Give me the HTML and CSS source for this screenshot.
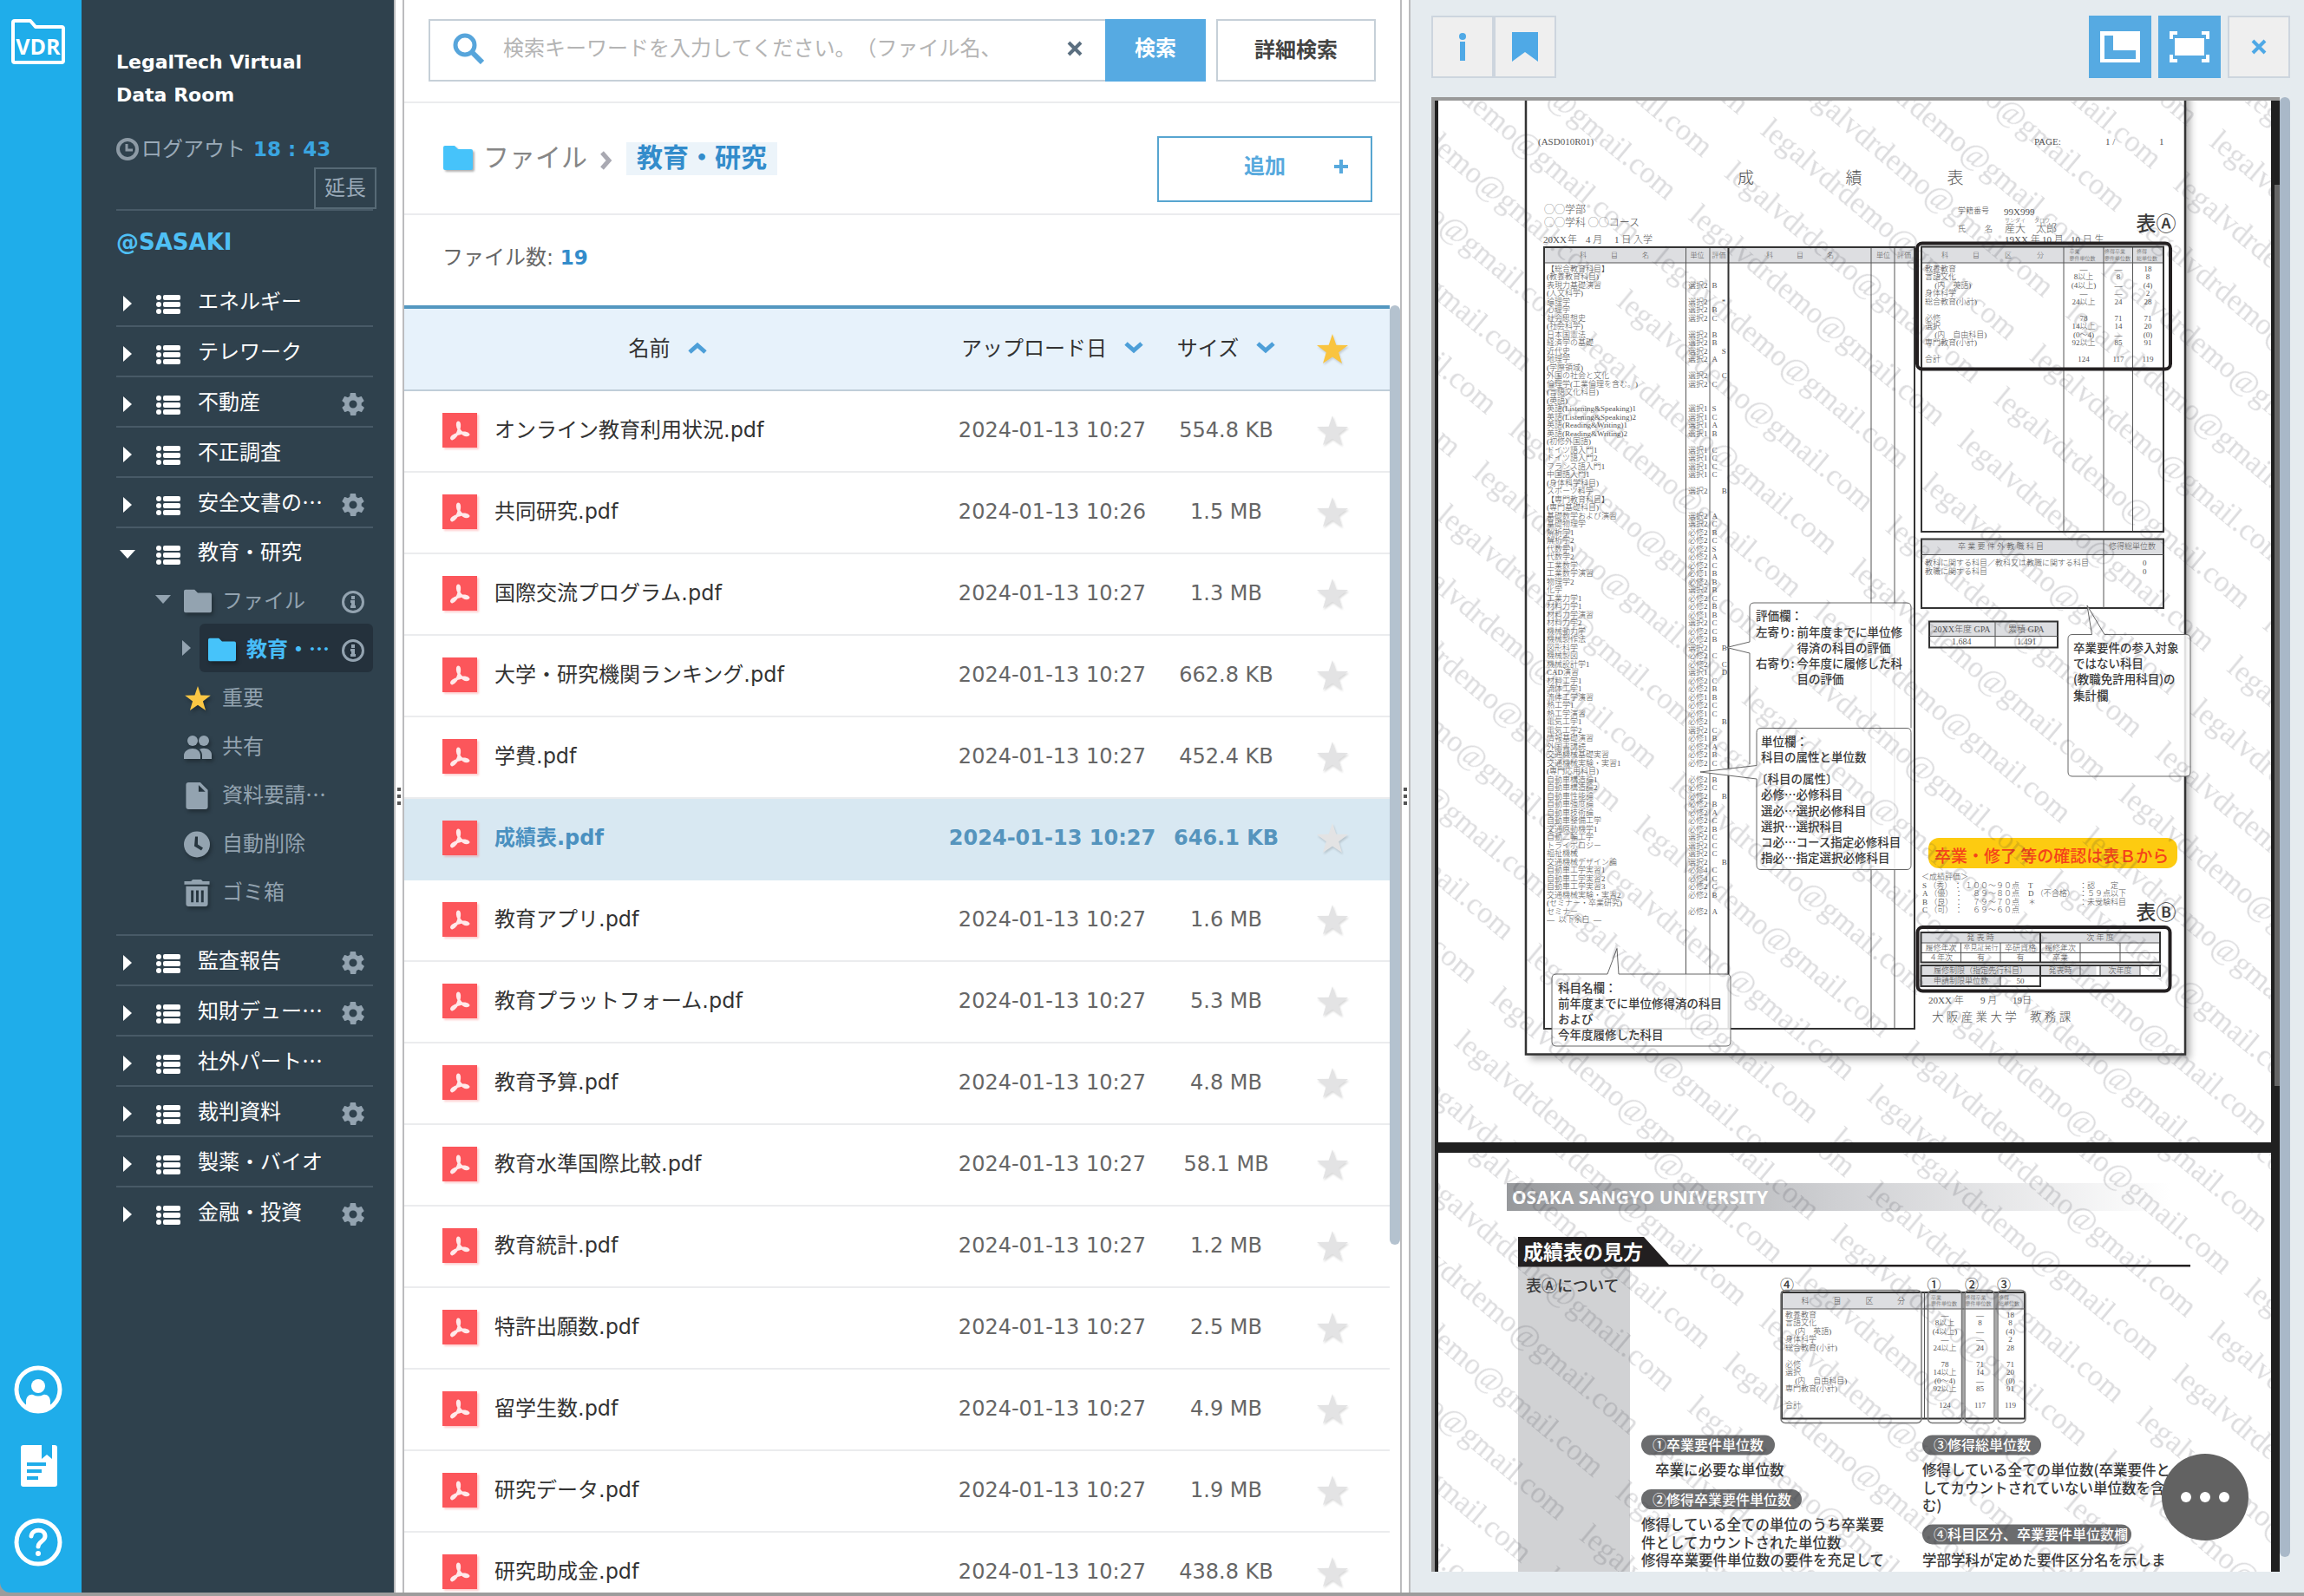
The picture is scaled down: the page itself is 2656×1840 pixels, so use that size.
FILE: index.html
```html
<!DOCTYPE html>
<html lang="ja">
<head>
<meta charset="utf-8">
<title>LegalTech Virtual Data Room</title>
<link rel="stylesheet" href="styles.css">
</head>
<body>
<svg class="defs" aria-hidden="true">
  <symbol id="i-list" viewBox="0 0 28 22"><g fill="currentColor"><rect width="6" height="6" rx="3"/><rect y="8" width="6" height="6" rx="3"/><rect y="16" width="6" height="6" rx="3"/><rect x="8" width="20" height="6" rx="2"/><rect x="8" y="8" width="20" height="6" rx="2"/><rect x="8" y="16" width="20" height="6" rx="2"/></g></symbol>
  <symbol id="i-gear" viewBox="2 2 20 20"><path fill="currentColor" d="M19.4 13c0-.3.1-.6.1-1s0-.7-.1-1l2.1-1.6c.2-.2.3-.4.1-.7l-2-3.4c-.1-.2-.4-.3-.6-.2l-2.5 1c-.5-.4-1.1-.7-1.7-1l-.4-2.6c0-.3-.2-.5-.5-.5h-4c-.2 0-.4.2-.5.4L9.100 5.100c-.6.200-1.200.600-1.700 1l-2.500-1c-.200-.100-.500 0-.600.200l-2 3.400c-.100.300 0 .500.200.700L4.600 11c0 .300-.100.600-.100 1s0 .700.100 1l-2.100 1.600c-.200.200-.300.400-.100.700l2 3.400c.100.200.400.300.600.200l2.500-1c.500.400 1.100.700 1.700 1l.400 2.600c0 .300.200.500.500.500h4c.200 0 .500-.200.500-.400l.400-2.600c.600-.300 1.200-.600 1.700-1l2.500 1c.200.100.500 0 .600-.200l2-3.400c.100-.200.100-.500-.100-.700zM12 15.500a3.500 3.500 0 1 1 0-7 3.500 3.500 0 0 1 0 7z"/></symbol>
  <symbol id="i-info" viewBox="0 0 26 26"><circle cx="13" cy="13" r="11.500" fill="none" stroke="currentColor" stroke-width="3"/><path fill="currentColor" d="M11 6h4v4h-4zM10 11h5v6h1v3h-6v-3h1v-3h-1z"/></symbol>
  <symbol id="i-right" viewBox="0 0 10 18"><path fill="currentColor" d="M0 0l10 9-10 9z"/></symbol>
  <symbol id="i-down" viewBox="0 0 18 10"><path fill="currentColor" d="M0 0h18l-9 10z"/></symbol>
  <symbol id="i-folder" viewBox="0 0 34 28"><path fill="currentColor" d="M2 0h11l4 4h15a2 2 0 0 1 2 2v20a2 2 0 0 1-2 2H2a2 2 0 0 1-2-2V2a2 2 0 0 1 2-2z"/></symbol>
  <symbol id="i-star" viewBox="0 0 36 34"><path fill="currentColor" d="M18 0l4.300 12.700L36 13l-10.800 8.300L29 34l-11-7.500L7 34l3.800-12.700L0 13l13.700-.300z"/></symbol>
  <symbol id="i-people" viewBox="0 0 32 28"><g fill="currentColor"><circle cx="10" cy="7" r="6"/><circle cx="23" cy="7" r="6"/><path d="M0 28v-4c0-5 5-8 10-8s9 3 9 8v4zM21 28v-4c0-3-1-5-3-7 6-3 14 0 14 6v5z"/></g></symbol>
  <symbol id="i-doc" viewBox="0 0 26 32"><path fill="currentColor" fill-rule="evenodd" d="M3 0h14l9 9v20a3 3 0 0 1-3 3H3a3 3 0 0 1-3-3V3a3 3 0 0 1 3-3zM15 3v8h8z"/></symbol>
  <symbol id="i-clock" viewBox="0 0 30 30"><path fill="currentColor" fill-rule="evenodd" d="M15 0a15 15 0 1 0 0 30 15 15 0 0 0 0-30zM13 6h3v9l6 4-2 3-8-5z"/></symbol>
  <symbol id="i-trash" viewBox="0 0 30 32"><path fill="currentColor" fill-rule="evenodd" d="M10 0h10l2 2h8v4H0V2h8zM2 8h26v21a3 3 0 0 1-3 3H5a3 3 0 0 1-3-3zM8 13v14h3V13zM14 13v14h3V13zM20 13v14h3V13z"/></symbol>
  <symbol id="i-pdf" viewBox="0 0 40 40"><path fill="#fc565b" d="M0 0h40v40H0z"/><path fill="none" stroke="#ffe9ea" stroke-width="3" stroke-linecap="round" stroke-linejoin="round" d="M18 11c2 0 2 4 1 8-1 5-5 10-8 11-2-1 2-5 8-6 5-2 10-1 11 1-3 2-8-1-11-6-2-3-2-7-1-8z"/></symbol>
  <symbol id="i-up" viewBox="0 0 22 14"><path fill="none" stroke="currentColor" stroke-width="5" d="M2 12l9-8 9 8"/></symbol>
  <symbol id="i-dn" viewBox="0 0 22 14"><path fill="none" stroke="currentColor" stroke-width="5" d="M2 2l9 8 9-8"/></symbol>
  <symbol id="i-x" viewBox="0 0 18 18"><path fill="none" stroke="currentColor" stroke-width="4" d="M2 2l14 14M16 2L2 16"/></symbol>
</svg>

<div class="app">
  <nav class="rail" aria-label="メイン">
    <a class="rail-link" href="#" aria-label="VDR">
      <svg width="62" height="54" viewBox="0 0 62 54"><path fill="none" stroke="#fff" stroke-width="4" stroke-linejoin="round" d="M2 4q0-2 2-2h18l6 7h30q2 0 2 2v37q0 2-2 2H4q-2 0-2-2z"/><text class="vdr" x="31" y="41" text-anchor="middle">VDR</text></svg>
    </a>
    <div class="rail-bottom">
      <a class="rail-link" href="#" aria-label="ユーザー"><svg width="56" height="56" viewBox="0 0 56 56"><circle cx="28" cy="28" r="25" fill="none" stroke="#fff" stroke-width="5"/><circle cx="28" cy="24" r="8" fill="#fff"/><path fill="#fff" d="M14 49V42c0-6 4-9 8-8q6 3 12 0c4-1 8 2 8 8v7q-14 8-28 0z"/></svg></a>
      <a class="rail-link" href="#" aria-label="マニュアル"><svg width="56" height="56" viewBox="0 0 56 56"><path fill="#fff" fill-rule="evenodd" d="M11 4h21v16l6-5 6 5V4h3q3 0 3 3v42q0 3-3 3H11q-3 0-3-3V7q0-3 3-3zM15 24v4h22v-4zM15 32v4h17v-4zM15 40v4h13v-4z"/></svg></a>
      <a class="rail-link" href="#" aria-label="ヘルプ"><svg width="56" height="56" viewBox="0 0 56 56"><circle cx="28" cy="28" r="25" fill="none" stroke="#fff" stroke-width="5"/><path fill="none" stroke="#fff" stroke-width="5" stroke-linecap="round" d="M20 21c1-9 16-9 16 0 0 6-8 6-8 12"/><circle cx="28" cy="41" r="3" fill="#fff"/></svg></a>
    </div>
  </nav>

  <aside class="side">
    <h1 class="brand">LegalTech Virtual Data Room</h1>
    <div class="session">
      <svg class="dim" width="26" height="26" viewBox="0 0 26 26"><circle cx="13" cy="13" r="11" fill="none" stroke="currentColor" stroke-width="4"/><path fill="none" stroke="currentColor" stroke-width="3" d="M12 7v7h7"/></svg>
      <span>ログアウト</span><b class="timer">18 : 43</b>
    </div>
    <div class="extend-row"><button class="extend" type="button">延長</button></div>
    <p class="user">@SASAKI</p>
    <ul class="tree">
      <li class="project"><a class="row" href="#"><svg class="arr"><use href="#i-right"/></svg><svg class="lst"><use href="#i-list"/></svg><span>エネルギー</span></a></li>
      <li class="project"><a class="row" href="#"><svg class="arr"><use href="#i-right"/></svg><svg class="lst"><use href="#i-list"/></svg><span>テレワーク</span></a></li>
      <li class="project"><a class="row" href="#"><svg class="arr"><use href="#i-right"/></svg><svg class="lst"><use href="#i-list"/></svg><span>不動産</span><svg class="act"><use href="#i-gear"/></svg></a></li>
      <li class="project"><a class="row" href="#"><svg class="arr"><use href="#i-right"/></svg><svg class="lst"><use href="#i-list"/></svg><span>不正調査</span></a></li>
      <li class="project"><a class="row" href="#"><svg class="arr"><use href="#i-right"/></svg><svg class="lst"><use href="#i-list"/></svg><span>安全文書の…</span><svg class="act"><use href="#i-gear"/></svg></a></li>
      <li class="project open"><a class="row" href="#"><svg class="arr-d"><use href="#i-down"/></svg><svg class="lst"><use href="#i-list"/></svg><span>教育・研究</span></a>
        <ul class="sub">
          <li class="item"><svg class="tog"><use href="#i-down"/></svg><a class="leaf" href="#"><svg class="ic"><use href="#i-folder"/></svg><span>ファイル</span><svg class="act"><use href="#i-info"/></svg></a></li>
          <li class="item current"><svg class="tog"><use href="#i-right"/></svg><a class="leaf" href="#"><svg class="ic"><use href="#i-folder"/></svg><span>教育・…</span><svg class="act"><use href="#i-info"/></svg></a></li>
          <li class="item"><a class="leaf" href="#"><svg class="ic gold"><use href="#i-star"/></svg><span>重要</span></a></li>
          <li class="item"><a class="leaf" href="#"><svg class="ic"><use href="#i-people"/></svg><span>共有</span></a></li>
          <li class="item"><a class="leaf" href="#"><svg class="ic tall"><use href="#i-doc"/></svg><span>資料要請…</span></a></li>
          <li class="item"><a class="leaf" href="#"><svg class="ic tall"><use href="#i-clock"/></svg><span>自動削除</span></a></li>
          <li class="item"><a class="leaf" href="#"><svg class="ic tall"><use href="#i-trash"/></svg><span>ゴミ箱</span></a></li>
        </ul>
      </li>
      <li class="project"><a class="row" href="#"><svg class="arr"><use href="#i-right"/></svg><svg class="lst"><use href="#i-list"/></svg><span>監査報告</span><svg class="act"><use href="#i-gear"/></svg></a></li>
      <li class="project"><a class="row" href="#"><svg class="arr"><use href="#i-right"/></svg><svg class="lst"><use href="#i-list"/></svg><span>知財デュー…</span><svg class="act"><use href="#i-gear"/></svg></a></li>
      <li class="project"><a class="row" href="#"><svg class="arr"><use href="#i-right"/></svg><svg class="lst"><use href="#i-list"/></svg><span>社外パート…</span></a></li>
      <li class="project"><a class="row" href="#"><svg class="arr"><use href="#i-right"/></svg><svg class="lst"><use href="#i-list"/></svg><span>裁判資料</span><svg class="act"><use href="#i-gear"/></svg></a></li>
      <li class="project"><a class="row" href="#"><svg class="arr"><use href="#i-right"/></svg><svg class="lst"><use href="#i-list"/></svg><span>製薬・バイオ</span></a></li>
      <li class="project"><a class="row" href="#"><svg class="arr"><use href="#i-right"/></svg><svg class="lst"><use href="#i-list"/></svg><span>金融・投資</span><svg class="act"><use href="#i-gear"/></svg></a></li>
    </ul>
  </aside>

  <div class="splitter"><i></i><i></i><i></i></div>

  <main class="files">
    <form class="search" role="search">
      <div class="searchbox">
        <svg width="36" height="36" viewBox="0 0 36 36"><circle cx="14" cy="14" r="11" fill="none" stroke="#57a5db" stroke-width="5"/><path stroke="#57a5db" stroke-width="6" d="M22 22l12 12"/></svg>
        <input type="text" aria-label="検索キーワード" placeholder="検索キーワードを入力してください。（ファイル名、">
        <button class="clear" type="button" aria-label="クリア"><svg width="18" height="18"><use href="#i-x"/></svg></button>
      </div>
      <button class="go" type="submit">検索</button>
      <button class="advanced" type="button">詳細検索</button>
    </form>
    <div class="crumbs">
      <a class="crumb" href="#"><svg width="34" height="28"><use href="#i-folder"/></svg>ファイル</a>
      <svg width="14" height="22" viewBox="0 0 14 22"><path fill="none" stroke="#a9a9b2" stroke-width="5" d="M2 2l8 9-8 9"/></svg>
      <a class="crumb here" href="#">教育・研究</a>
      <button class="add" type="button">追加<svg width="16" height="16" viewBox="0 0 16 16"><path stroke="currentColor" stroke-width="4" d="M8 0v16M0 8h16"/></svg></button>
    </div>
    <p class="count">ファイル数: <b>19</b></p>
    <div class="scroller">
      <div class="scroll-body">
        <table class="list">
          <colgroup><col><col class="c-date"><col class="c-size"><col class="c-star"></colgroup>
          <thead><tr>
            <th>名前<svg class="sort"><use href="#i-up"/></svg></th>
            <th>アップロード日<svg class="sort"><use href="#i-dn"/></svg></th>
            <th>サイズ<svg class="sort"><use href="#i-dn"/></svg></th>
            <th aria-label="重要"><svg class="star gold"><use href="#i-star"/></svg></th>
          </tr></thead>
          <tbody>
            <tr><td><a class="file" href="#"><svg><use href="#i-pdf"/></svg>オンライン教育利用状況.pdf</a></td><td>2024-01-13 10:27</td><td>554.8 KB</td><td><svg class="star"><use href="#i-star"/></svg></td></tr>
            <tr><td><a class="file" href="#"><svg><use href="#i-pdf"/></svg>共同研究.pdf</a></td><td>2024-01-13 10:26</td><td>1.5 MB</td><td><svg class="star"><use href="#i-star"/></svg></td></tr>
            <tr><td><a class="file" href="#"><svg><use href="#i-pdf"/></svg>国際交流プログラム.pdf</a></td><td>2024-01-13 10:27</td><td>1.3 MB</td><td><svg class="star"><use href="#i-star"/></svg></td></tr>
            <tr><td><a class="file" href="#"><svg><use href="#i-pdf"/></svg>大学・研究機関ランキング.pdf</a></td><td>2024-01-13 10:27</td><td>662.8 KB</td><td><svg class="star"><use href="#i-star"/></svg></td></tr>
            <tr><td><a class="file" href="#"><svg><use href="#i-pdf"/></svg>学費.pdf</a></td><td>2024-01-13 10:27</td><td>452.4 KB</td><td><svg class="star"><use href="#i-star"/></svg></td></tr>
            <tr class="selected"><td><a class="file" href="#"><svg><use href="#i-pdf"/></svg>成績表.pdf</a></td><td>2024-01-13 10:27</td><td>646.1 KB</td><td><svg class="star"><use href="#i-star"/></svg></td></tr>
            <tr><td><a class="file" href="#"><svg><use href="#i-pdf"/></svg>教育アプリ.pdf</a></td><td>2024-01-13 10:27</td><td>1.6 MB</td><td><svg class="star"><use href="#i-star"/></svg></td></tr>
            <tr><td><a class="file" href="#"><svg><use href="#i-pdf"/></svg>教育プラットフォーム.pdf</a></td><td>2024-01-13 10:27</td><td>5.3 MB</td><td><svg class="star"><use href="#i-star"/></svg></td></tr>
            <tr><td><a class="file" href="#"><svg><use href="#i-pdf"/></svg>教育予算.pdf</a></td><td>2024-01-13 10:27</td><td>4.8 MB</td><td><svg class="star"><use href="#i-star"/></svg></td></tr>
            <tr><td><a class="file" href="#"><svg><use href="#i-pdf"/></svg>教育水準国際比較.pdf</a></td><td>2024-01-13 10:27</td><td>58.1 MB</td><td><svg class="star"><use href="#i-star"/></svg></td></tr>
            <tr><td><a class="file" href="#"><svg><use href="#i-pdf"/></svg>教育統計.pdf</a></td><td>2024-01-13 10:27</td><td>1.2 MB</td><td><svg class="star"><use href="#i-star"/></svg></td></tr>
            <tr><td><a class="file" href="#"><svg><use href="#i-pdf"/></svg>特許出願数.pdf</a></td><td>2024-01-13 10:27</td><td>2.5 MB</td><td><svg class="star"><use href="#i-star"/></svg></td></tr>
            <tr><td><a class="file" href="#"><svg><use href="#i-pdf"/></svg>留学生数.pdf</a></td><td>2024-01-13 10:27</td><td>4.9 MB</td><td><svg class="star"><use href="#i-star"/></svg></td></tr>
            <tr><td><a class="file" href="#"><svg><use href="#i-pdf"/></svg>研究データ.pdf</a></td><td>2024-01-13 10:27</td><td>1.9 MB</td><td><svg class="star"><use href="#i-star"/></svg></td></tr>
            <tr><td><a class="file" href="#"><svg><use href="#i-pdf"/></svg>研究助成金.pdf</a></td><td>2024-01-13 10:27</td><td>438.8 KB</td><td><svg class="star"><use href="#i-star"/></svg></td></tr>
          </tbody>
        </table>
      </div>
      <div class="track"><div class="thumb"></div></div>
    </div>
  </main>

  <div class="splitter"><i></i><i></i><i></i></div>

  <section class="viewer" aria-label="プレビュー">
    <div class="tools">
      <div class="pair">
        <button class="tool" type="button" aria-label="情報"><svg width="8" height="32" viewBox="0 0 8 32"><circle cx="4" cy="4" r="4" fill="#4fa9e6"/><path fill="#4fa9e6" d="M1 10h6v22H1z"/></svg></button>
        <button class="tool" type="button" aria-label="ブックマーク"><svg width="30" height="34" viewBox="0 0 30 34"><path fill="#4fa9e6" d="M0 0h30v34l-15-11L0 34z"/></svg></button>
      </div>
      <div class="right-tools">
        <button class="tool on" type="button" aria-label="小窓"><svg width="46" height="36" viewBox="0 0 46 36"><path fill="#fff" fill-rule="evenodd" d="M0 0h46v36H0zM5 5v27h36V22H15V5z"/></svg></button>
        <button class="tool on" type="button" aria-label="全画面"><svg width="46" height="36" viewBox="0 0 46 36"><path fill="#fff" d="M6 8h34v20H6z"/><path fill="none" stroke="#fff" stroke-width="4" d="M2 9V2h7M37 2h7v7M44 27v7h-7M9 34H2v-7"/></svg></button>
        <button class="tool" type="button" aria-label="閉じる"><svg class="blue" width="18" height="18"><use href="#i-x"/></svg></button>
      </div>
    </div>
    <div class="frame">
      <div class="pages">
        <svg class="page" viewBox="3316 232 1920 2402" role="img" aria-label="成績表 1ページ">
          <defs>
            <pattern id="wm1" width="810" height="129" patternUnits="userSpaceOnUse" patternTransform="rotate(40) translate(4112 -2462)"><text class="wm" x="2" y="90">legalvdrdemo@gmail.com</text></pattern>
            <filter id="soft" x="-5%" y="-5%" width="110%" height="110%"><feGaussianBlur stdDeviation="10"/></filter>
          </defs>
          <path fill="#fff" d="M3316 232h1920v2402H3316z"/>
          <path fill="#000" opacity=".35" filter="url(#soft)" d="M3528 180h1520v2262H3528z"/>
          <path class="ink5" fill="#fff" d="M3518 180h1520v2251H3518z"/>
          <g class="sf">
            <text class="z22" x="3546" y="326">(ASD010R01)</text>
            <text class="z22" x="4690" y="326">PAGE:</text><text class="z22" x="4854" y="326">1 /</text><text class="z22" x="4978" y="326">1</text>
            <text class="z38" x="4006" y="410">成</text><text class="z38" x="4255" y="410">績</text><text class="z38" x="4489" y="410">表</text>
            <text class="z24 jp" x="3560" y="480">◯◯学部</text>
            <text class="z24 jp" x="3560" y="511">◯◯学科 ◯◯コース</text>
            <text class="z22" x="3558" y="552">20XX</text><text class="z22" x="3614" y="552">年</text><text class="z22" x="3656" y="552">4 月</text><text class="z22" x="3722" y="552">1 日 入学</text>
            <text class="z18" x="4514" y="485">学籍番号</text><text class="z22" x="4620" y="487">99X999</text>
            <text class="z12" x="4622" y="508">サンダイ</text><text class="z12" x="4690" y="508">タロウ</text>
            <text class="z18" x="4514" y="527">氏</text><text class="z18" x="4576" y="527">名</text>
            <text class="z24" x="4622" y="527">産大</text><text class="z24" x="4694" y="527">太郎</text>
            <text class="z22" x="4622" y="551">19XX 年</text><text class="z22" x="4708" y="551">10 月</text><text class="z22" x="4774" y="551">10 日 生</text>
          </g>
          <text class="gt z46" x="4925" y="512">表Ⓐ</text>
          <path fill="#dddee1" d="M3560 572h852v34h-852zM4430 569h558v37h-558z"/>
          <path class="ink2" d="M3887 570v1802M3942 570v1802M4314 570v1802M4368 570v1802M3560 606h852M4430 606h558M4758 569v657M4850 569v657M4917 569v657"/>
          <path class="ink4" d="M3560 570h854v1802h-854zM3985 570v1802M4430 569h558v657h-558z"/>
          <g class="sf mid z16">
            <text x="3650" y="588">科</text><text x="3722" y="588">目</text><text x="3794" y="588">名</text><text x="3913" y="588">単位</text><text x="3963" y="588">評価</text>
            <text x="4080" y="588">科</text><text x="4150" y="588">目</text><text x="4220" y="588">名</text><text x="4342" y="588">単位</text><text x="4390" y="588">評価</text>
            <text x="4484" y="588">科</text><text x="4556" y="588">目</text><text x="4630" y="588">区</text><text x="4704" y="588">分</text>
          </g>
          <g class="sf z12">
            <text x="4771" y="580">卒業</text><text x="4771" y="595">要件単位数</text>
            <text x="4852" y="580">修得卒業</text><text x="4852" y="595">要件単位数</text>
            <text x="4926" y="580">修得</text><text x="4926" y="595">総単位数</text>
          </g>
          <foreignObject x="3566" y="610" width="316" height="1560"><pre class="rows">【総合教育科目】
(教養教育科目)
表現力基礎演習
(人文科学)
論理学
心理学
社会思想史
(社会科学)
日本国憲法
経済学の基礎
近代史
地理学
(学際領域)
外国の社会と文化
倫理学(工業倫理を含む。)
(言語文化科目)
(英語)
英語(Listening&amp;Speaking)1
英語(Listening&amp;Speaking)2
英語(Reading&amp;Writing)1
英語(Reading&amp;Writing)2
(初修外国語)
ドイツ語入門1
ドイツ語入門2
フランス語入門1
中国語入門1
(身体科学科目)
スポーツ科学
【専門教育科目】
(専門基礎科目)
基礎数学および演習
基礎物理学
解析学1
解析学2
代数学1
代数学2
工業数学
工業数学演習
物理学2
化学
工業力学1
材料力学1
材料力学演習
材料力学2
機械動力学
機械製作法
図形科学
機械製図
機械設計学1
CAD演習
材料工学1
流体工学1
流体工学演習
熱工学1
熱工学演習
電気工学1
電気工学2
情報基礎演習
外国書講読
交通機械基礎実習
交通機械実験・実習1
(専門応用科目)
自動車構造論1
自動車構造論2
自動車性能論
自動車強度論
自動車技術論
自動車整備工学
交通原動機学1
自動二輪工学
トライボロジー
福祉機械
交通機械デザイン論
自動車工学実習1
自動車工学実習2
自動車工学実習3
交通機械実験・実習2
(セミナー・卒業研究)
セミナー
―  以下余白  ―</pre></foreignObject>
          <foreignObject x="3892" y="610" width="50" height="1560"><pre class="rows">&nbsp;

選択2

選択2
選択2
選択2

選択2
選択2
選択2
選択2

選択2
選択2


選択1
選択1
選択1
選択1

選択1
選択1
選択1
選択1

選択2


選択2
選択2
必修2
必修2
必修2
必修2
必修2
必修1
必修2
選択2
必修2
必修2
必修1
選択2
必修2
必修2
選択2
必修2
必修2
選択1
必修2
必修2
必修1
必修2
必修1
必修2
選択2
必修1
必修2
必修2
必修2

必修2
必修2
必修2
必修2
必修2
必修2
必修2
選択2
選択2
選択2
選択2
必修4
必修4
必修2
必修2

必修2</pre></foreignObject>
          <foreignObject x="3947" y="610" width="38" height="1560"><pre class="rows">&nbsp;

B

     *
B
C

B
B
     S
A

     C
C


S
C
A
B

C
C
C
C

     B


A
C
B
C
S
A
C
B
B
B
C
B
B
C
C
B
     B
C
     C
     D
C
B
B
C
C
     B
C
B
A
B
C

B
C
     B
B
A
C
B
C
C
C
     B
C
C
C
B

A</pre></foreignObject>
          <foreignObject x="4438" y="610" width="300" height="240"><pre class="rows">教養教育
言語文化
　 (内　英語)
身体科学
総合教育(小計)

必修
選択
　 (内　自由科目)
専門教育(小計)

合計</pre></foreignObject>
          <foreignObject x="4762" y="610" width="84" height="240"><pre class="rows cen">―
8以上
(4以上)
―
24以上

78
14以上
(0～4)
92以上

124</pre></foreignObject>
          <foreignObject x="4853" y="610" width="62" height="240"><pre class="rows cen">―
8
―
―
24

71
14
―
85

117</pre></foreignObject>
          <foreignObject x="4921" y="610" width="62" height="240"><pre class="rows cen">18
8
(4)
2
28

71
20
(0)
91

119</pre></foreignObject>
          <rect class="frame-ink" x="4420" y="561" width="584" height="290" rx="12"/>

          <path fill="#dddee1" d="M4430 1243h558v36h-558zM4448 1433h296v34h-296z"/>
          <path class="ink4" d="M4430 1243h558v159h-558zM4448 1433h296v60h-296z"/>
          <path class="ink2" d="M4430 1279h558M4850 1243v159M4448 1467h296M4600 1433v60"/>
          <g class="sf z18">
            <text x="4514" y="1260">卒 業 要 件 外 教 職 科 目</text><text x="4862" y="1260">修得総単位数</text>
            <text x="4438" y="1298">教科に関する科目／教科又は教職に関する科目</text><text x="4940" y="1298">0</text>
            <text x="4438" y="1317">教職に関する科目</text><text x="4940" y="1317">0</text>
            <text class="z20" x="4457" y="1450">20XX年度 GPA</text><text class="z20" x="4630" y="1450">累積 GPA</text>
            <text class="z20" x="4500" y="1479">1.684</text><text class="z20" x="4650" y="1479">1.491</text>
          </g>

          <path class="call" d="M4034 1762V1506l-53-13 53-13v-80q0-10 10-10h352q10 0 10 10v279"/>
          <path class="call" d="M4060 1679h336q10 0 10 10v306q0 10-10 10h-336q-10 0-10-10v-199l-130-16 130-15v-76q0-10 10-10z"/>
          <path class="call" d="M3588 2246h118l22-59 4 59h248q10 0 10 10v146q0 10-10 10h-392q-10 0-10-10v-146q0-10 10-10z"/>
          <path class="call" d="M4778 1463h45l-11-67 40 67h188q10 0 10 10v307q0 10-10 10h-262q-10 0-10-10v-307q0-10 10-10z"/>
          <g class="gt z27">
            <text x="4048" y="1418">評価欄：</text><text x="4048" y="1455">左寄り:</text><text x="4143" y="1455">前年度までに単位修</text><text x="4143" y="1492">得済の科目の評価</text><text x="4048" y="1528">右寄り:</text><text x="4143" y="1528">今年度に履修した科</text><text x="4143" y="1564">目の評価</text>
            <text x="4060" y="1707">単位欄：</text><text x="4060" y="1744">科目の属性と単位数</text><text x="4048" y="1794">〔科目の属性〕</text><text x="4060" y="1830">必修…必修科目</text><text x="4060" y="1867">選必…選択必修科目</text><text x="4060" y="1903">選択…選択科目</text><text x="4060" y="1940">コ必…コース指定必修科目</text><text x="4060" y="1976">指必…指定選択必修科目</text>
            <text x="3592" y="2276">科目名欄：</text><text x="3592" y="2312">前年度までに単位修得済の科目</text><text x="3592" y="2347">および</text><text x="3592" y="2383">今年度履修した科目</text>
            <text x="4780" y="1492">卒業要件の参入対象</text><text x="4780" y="1528">ではない科目</text><text x="4780" y="1564">(教職免許用科目)の</text><text x="4780" y="1601">集計欄</text>
          </g>
          <rect x="4446" y="1932" width="574" height="70" rx="24" fill="#fdcb11"/>
          <text class="gt hot" x="4460" y="1970">卒業・修了 等の確認は表Ｂから</text>
          <g class="sf z18">
            <text x="4430" y="2022">＜成績評価＞</text>
            <text x="4432" y="2041">S （秀） ：</text><text x="4530" y="2041">１００～９０点</text><text x="4676" y="2041">T</text><text x="4794" y="2041">：認　　定</text>
            <text x="4432" y="2060">A （優） ：</text><text x="4548" y="2060">８９～８０点</text><text x="4676" y="2060">D （不合格）</text><text x="4794" y="2060">：５９点以下</text>
            <text x="4432" y="2079">B （良） ：</text><text x="4548" y="2079">７９～７０点</text><text x="4676" y="2079">＊</text><text x="4794" y="2079">：未受験科目</text>
            <text x="4432" y="2098">C （可） ：</text><text x="4548" y="2098">６９～６０点</text>
          </g>
          <text class="gt z46" x="4925" y="2100">表Ⓑ</text>
          <path fill="#dddee1" d="M4429 2150h551v24h-551zM4429 2226h404v24h-404zM4704 2226h94v24h-94zM4842 2226h92v24h-92zM4429 2250h184v24h-184z"/>
          <path class="ink2" d="M4429 2174h551M4429 2197h551M4521 2174v45M4612 2174v45M4796 2174v45M4888 2174v45M4796 2226v24M4842 2226v24M4934 2226v24M4612 2250v24"/>
          <path class="ink4" d="M4429 2150h551v69h-551zM4704 2150v69M4429 2226h551v24h-551zM4429 2250v24h275v-48"/>
          <g class="sf mid z18">
            <text x="4566" y="2162">発 表 時</text><text x="4842" y="2162">次 年 度</text>
            <text x="4475" y="2185">履修年次</text><text class="z16" x="4567" y="2185">卒見証発行</text><text x="4658" y="2185">卒研資格</text><text x="4750" y="2185">履修年次</text>
            <text x="4475" y="2208">４年次</text><text x="4567" y="2208">有</text><text x="4658" y="2208">有</text><text x="4750" y="2208">卒業</text>
            <text x="4566" y="2238">履修制限（指定先行科目）</text><text x="4750" y="2238">発表時</text><text x="4888" y="2238">次年度</text>
            <text x="4521" y="2262">申請制限単位数</text><text x="4658" y="2262">50</text>
          </g>
          <rect class="frame-ink" x="4421" y="2138" width="582" height="147" rx="12"/>
          <g class="sf"><text class="z22" x="4446" y="2305">20XX 年</text><text class="z22" x="4566" y="2305">9 月</text><text class="z22" x="4640" y="2305">19日</text><text class="z27" x="4454" y="2345">大 阪 産 業 大 学</text><text class="z27" x="4680" y="2345">教 務 課</text></g>
          <path fill="url(#wm1)" d="M3316 232h1920v2402H3316z"/>
        </svg>

        <svg class="page" viewBox="3316 2658 1920 966" role="img" aria-label="成績表 2ページ">
          <defs>
            <pattern id="wm2" width="810" height="129" patternUnits="userSpaceOnUse" patternTransform="rotate(40) translate(5066 -356)"><text class="wm" x="2" y="90">legalvdrdemo@gmail.com</text></pattern>
            <linearGradient id="bar"><stop offset="0" stop-color="#97999c"/><stop offset=".5" stop-color="#cfd0d3"/><stop offset="1" stop-color="#fff"/></linearGradient>
          </defs>
          <path fill="#fff" d="M3316 2658h1920v966H3316z"/>
          <path fill="url(#bar)" d="M3474 2728h1530v64H3474z"/>
          <text class="univ" x="3486" y="2760">OSAKA SANGYO UNIVERSITY</text>
          <path fill="#d1d2d4" d="M3500 2920h258v704h-258z"/>
          <path fill="#221f20" d="M3500 2852h290l58 64h1202v5H3500z"/>
          <text class="gt title" x="3512" y="2883">成績表の見方</text>
          <text class="gt z36" x="3518" y="2962">表Ⓐについて</text>
          <g class="gt mid z32"><text x="4120" y="2959">④</text><text x="4459" y="2959">①</text><text x="4546" y="2959">②</text><text x="4620" y="2959">③</text></g>
          <path fill="#dddee1" d="M4108 2980h560v38h-560z"/>
          <path class="ink4" d="M4108 2980h560v291h-560z"/>
          <path class="ink2" d="M4108 3018h560M4437 2980v291M4526 2980v291M4602 2980v291"/>
          <g class="group"><rect x="4106" y="2975" width="324" height="306" rx="10"/><rect x="4445" y="2975" width="78" height="306" rx="10"/><rect x="4530" y="2975" width="68" height="306" rx="10"/><rect x="4606" y="2975" width="64" height="306" rx="10"/></g>
          <g class="sf mid z18"><text x="4162" y="3000">科</text><text x="4236" y="3000">目</text><text x="4310" y="3000">区</text><text x="4383" y="3000">分</text></g>
          <g class="sf z12"><text x="4452" y="2992">卒業</text><text x="4452" y="3006">要件単位数</text><text x="4531" y="2992">修得卒業</text><text x="4531" y="3006">要件単位数</text><text x="4608" y="2992">修得</text><text x="4608" y="3006">総単位数</text></g>
          <foreignObject x="4116" y="3022" width="300" height="240"><pre class="rows">教養教育
言語文化
　 (内　英語)
身体科学
総合教育(小計)

必修
選択
　 (内　自由科目)
専門教育(小計)

合計</pre></foreignObject>
          <foreignObject x="4442" y="3022" width="84" height="240"><pre class="rows cen">―
8以上
(4以上)
―
24以上

78
14以上
(0～4)
92以上

124</pre></foreignObject>
          <foreignObject x="4534" y="3022" width="62" height="240"><pre class="rows cen">―
8
―
―
24

71
14
―
85

117</pre></foreignObject>
          <foreignObject x="4604" y="3022" width="62" height="240"><pre class="rows cen">18
8
(4)
2
28

71
20
(0)
91

119</pre></foreignObject>
          <g fill="#6b6c6e"><rect x="3784" y="3309" width="308" height="46" rx="23"/><rect x="3784" y="3434" width="370" height="46" rx="23"/><rect x="4432" y="3309" width="274" height="46" rx="23"/><rect x="4432" y="3515" width="482" height="46" rx="23"/></g>
          <g class="gt z32 pill"><text x="3810" y="3330">①卒業要件単位数</text><text x="3810" y="3455">②修得卒業要件単位数</text><text x="4458" y="3330">③修得総単位数</text><text x="4458" y="3536">④科目区分、卒業要件単位数欄</text></g>
          <g class="gt z33">
            <text x="3816" y="3388">卒業に必要な単位数</text>
            <text x="3784" y="3514">修得している全ての単位のうち卒業要</text><text x="3784" y="3555">件としてカウントされた単位数</text><text x="3784" y="3596">修得卒業要件単位数の要件を充足して</text>
            <text x="4432" y="3388">修得している全ての単位数(卒業要件と</text><text x="4432" y="3429">してカウントされていない単位数を含</text><text x="4432" y="3470">む)</text><text x="4432" y="3596">学部学科が定めた要件区分名を示しま</text>
          </g>
          <path fill="url(#wm2)" d="M3316 2658h1920v966H3316z"/>
        </svg>
      </div>
      <div class="inner-track"><div class="inner-thumb"></div></div>
      <div class="outer-track"><div class="outer-thumb"></div></div>
      <button class="fab" type="button" aria-label="メニュー"><i></i><i></i><i></i></button>
    </div>
  </section>
</div>
</body>
</html>
```
FILE: styles.css
```css
:root {
  --sans: "DejaVu Sans", "Noto Sans CJK JP", sans-serif;
  --jp: "Noto Sans CJK JP", sans-serif;
  --blue: #56aae2;
  --line: #ebecee;
}
* { box-sizing: border-box; }
body { margin: 0; font: 24px/36px var(--sans); color: #333; background: #9c9c9c; text-spacing-trim: space-all; }
a { color: inherit; text-decoration: none; }
button, input { font: inherit; color: inherit; margin: 0; padding: 0; border: 0; border-radius: 0; background: none; text-spacing-trim: space-all; }
svg { display: block; flex: none; }
ul { list-style: none; margin: 0; padding: 0; }
.defs { position: absolute; width: 0; height: 0; }

.app { display: flex; height: calc(100vh - 4px); overflow: hidden; border-bottom-left-radius: 12px; }

/* icon rail */
.rail { flex: none; width: 94px; background: #1fadea; display: flex; flex-direction: column; justify-content: space-between; padding: 22px 0 30px; }
.rail-link { display: flex; justify-content: center; padding-right: 6px; }
.rail-bottom { display: grid; gap: 32px; }
.vdr { font: bold 25px "Open Sans", sans-serif; fill: #fff; }

/* project tree */
.side { flex: none; width: 360px; background: #2f414d; color: #fff; padding: 53px 20px 0 40px; }
.brand { margin: 0; width: 240px; font: bold 22px/38px var(--sans); }
.session { display: flex; align-items: center; margin-top: 25px; height: 36px; color: #9aaab8; }
.session span { margin: 0 9px 0 3px; }
.dim { color: #8d9aa5; }
.timer { color: #3aa5e0; font-size: 23px; }
.extend-row { display: flex; justify-content: flex-end; margin: 3px 4px 0 0; border-bottom: 2px solid #485a67; }
.extend { width: 72px; height: 48px; margin-right: -4px; border: 2px solid #566975; color: #9aaab8; line-height: 42px; }
.user { margin: 18px 0 22px; color: #4fc0f5; font-weight: bold; font-size: 26px; line-height: 36px; }
.tree { font-family: var(--jp); margin-right: 4px; }
.project { border-bottom: 2px solid #485a67; }
.project:last-child { border-bottom: 0; }
.row { display: flex; align-items: center; height: 56px; padding: 0 10px 0 8px; }
.arr { width: 10px; height: 18px; margin-right: 28px; color: #fff; }
.arr-d { width: 18px; height: 10px; margin: 0 24px 0 -4px; }
.lst { width: 28px; height: 22px; margin-right: 20px; }
.row svg { margin-top: 6px; }
.row .lst { margin-top: 8px; }
.row span { flex: 1; padding-bottom: 3px; }
.act { width: 26px; height: 26px; color: #93a3b0; }
.open .row { height: 54px; }
.sub { padding-bottom: 22px; color: #93a3b0; }
.item { display: flex; align-items: center; height: 56px; padding-left: 78px; }
.tog { width: 18px; height: 10px; margin: 0 15px 0 -33px; }
.leaf { flex: 1; display: flex; align-items: center; height: 56px; padding-right: 10px; }
.leaf span { flex: 1; }
.ic { width: 32px; height: 28px; margin: 3px 12px 0 0; filter: drop-shadow(2px 3px 2px rgba(0, 0, 0, .3)); }
.ic.tall { width: 30px; height: 31px; margin: 5px 14px 0 0; }
.leaf .act { margin-top: 6px; }
.gold { color: #fbc744; }
.current { padding-left: 76px; }
.current .tog { width: 10px; height: 18px; margin: 0 10px 0 0; }
.current .leaf { background: #24313c; border-radius: 6px; padding-left: 10px; }
.current .leaf span { color: #47bdf8; font-weight: bold; }
.current .ic { color: #46c3fa; }

.splitter { flex: none; width: 12px; background: #fff; border: solid #bcbcbe; border-width: 0 2px; display: flex; flex-direction: column; align-items: center; justify-content: center; gap: 4px; }
.splitter i { width: 4px; height: 4px; background: #555; }

/* file list */
.files { flex: 0 1 1148px; min-width: 0; background: #fff; display: flex; flex-direction: column; }
.search { display: flex; height: 119px; padding: 22px 28px 0; border-bottom: 2px solid var(--line); }
.searchbox { flex: 1; display: flex; align-items: center; height: 72px; padding: 0 26px; border: 2px solid #c6d0d8; border-right: 0; padding-bottom: 4px; }
.searchbox input { flex: 1; min-width: 0; margin-left: 22px; height: 36px; outline: 0; }
.searchbox input::placeholder { color: #b4b4b4; opacity: 1; }
.clear { color: #5b6f80; }
.go { width: 116px; height: 72px; padding-bottom: 4px; background: var(--blue); color: #fff; font-weight: bold; }
.advanced { width: 184px; height: 72px; margin-left: 12px; border: 2px solid #c6d0d8; color: #444; font-weight: bold; }
.crumbs { display: flex; align-items: flex-start; height: 129px; padding: 38px 32px 0 45px; border-bottom: 2px solid var(--line); font-size: 30px; line-height: 36px; }
.crumb { display: flex; align-items: center; gap: 12px; color: #868686; margin-top: 7px; }
.crumb svg { color: #46c3fa; filter: drop-shadow(2px 2px 1px rgba(0, 0, 0, .3)); }
.crumbs > svg { margin: 17px 16px 0 15px; }
.here { background: #ecf4fa; color: #338ccb; font-weight: bold; padding: 0 12px 2px; }
.add { display: flex; align-items: center; justify-content: flex-end; gap: 56px; width: 248px; height: 76px; margin-left: auto; padding: 0 26px 6px 0; border: 2px solid #57a5d0; color: #57a9dd; font-size: 24px; font-weight: bold; }
.count { margin: 0; height: 104px; padding: 31px 44px 0; color: #666; }
.count b { color: #338ccb; font-size: 23px; }
.scroller { flex: 1; min-height: 0; display: flex; }
.scroll-body { flex: 1; overflow: hidden; }
.list { width: 100%; border-collapse: separate; border-spacing: 0; table-layout: fixed; }
.c-date { width: 280px; }
.c-size { width: 121px; }
.c-star { width: 128px; }
.list th { height: 99px; padding: 0 0 2px; background: #e7f2fb; border-top: 4px solid #5397c0; border-bottom: 2px solid #c0ced9; font-weight: normal; white-space: nowrap; }
.list td { height: 94px; padding: 0 0 2px; text-align: center; color: #666; border-bottom: 2px solid var(--line); white-space: nowrap; }
.list td:first-child { text-align: left; }
.list th:last-child, .list td:last-child { padding-right: 4px; }
.sort { display: inline-block; width: 22px; height: 14px; margin-left: 20px; vertical-align: 2px; color: #4d9fd8; }
.file { display: flex; align-items: center; gap: 20px; padding-left: 44px; color: #333; }
.file svg { width: 40px; height: 40px; filter: drop-shadow(2px 2px 1px rgba(252, 86, 91, .3)); }
.star { width: 36px; height: 34px; margin: 0 auto; color: #e3e3e4; filter: drop-shadow(1px 2px 1px rgba(0, 0, 0, .15)); }
.star.gold { color: #f9c440; }
.selected td { background: #d8e8f2; border-color: #d8e8f2; color: #5594bd; font-weight: bold; }
.selected .file { color: #4a90c0; }
.track { width: 12px; }
.thumb { height: 73%; border-radius: 6px; background: #b4c2cf; }

/* document viewer */
.viewer { flex: 1 1 1030px; min-width: 0; background: #e5ebef; padding: 18px 16px 24px 24px; display: flex; flex-direction: column; gap: 22px; }
.tools { display: flex; justify-content: space-between; }
.pair { display: flex; }
.right-tools { display: flex; gap: 8px; }
.tool { width: 72px; height: 72px; display: flex; align-items: center; justify-content: center; background: #efefef; border: 2px solid #cdd5de; }
.tool.on { background: var(--blue); border-color: var(--blue); }
.blue { color: #4fa9e6; }
.frame { position: relative; flex: 1; min-height: 0; display: flex; border-left: 4px solid #999; background: linear-gradient(#999 4px, #202020 4px); }
.pages { flex: 1; min-width: 0; display: flex; flex-direction: column; gap: 12px; margin: 4px 4px 0; overflow: hidden; }
.page { width: 100%; height: auto; }
.inner-track { width: 6px; padding-top: 101px; }
.inner-thumb { height: 65%; background: #666; }
.outer-track { width: 12px; background: #e5ebef; }
.outer-thumb { height: 99%; border-radius: 6px; background: #a9b8c8; }
.fab { position: absolute; right: 48px; bottom: 36px; width: 100px; height: 100px; border-radius: 50%; background: #626262; display: flex; align-items: center; justify-content: center; gap: 10px; }
.fab i { width: 12px; height: 12px; border-radius: 50%; background: #fff; }

/* drawn pages */
.page text { dominant-baseline: central; }
.sf text { font-family: "Liberation Serif", "Noto Sans CJK JP", serif; font-weight: 300; fill: #555; }
.sf .jp { font-family: var(--jp); }
.gt, .gt text { font-family: var(--jp); font-weight: 500; fill: #3a3a3a; }
.mid text { text-anchor: middle; }
.z12 { font-size: 12px; }
.z16 { font-size: 16px; }
.z18 { font-size: 18px; }
.z20 { font-size: 20px; }
.z22 { font-size: 22px; }
.z24 { font-size: 24px; }
.z27 { font-size: 27px; }
.z32 { font-size: 32px; }
.z33 { font-size: 33px; }
.z36 { font-size: 36px; }
.z38 { font-size: 38px; }
.z46 { font-size: 46px; }
.page .hot { font-size: 38px; fill: #f5421a; }
.page .title { font-size: 46px; fill: #fff; font-weight: bold; }
.page .pill text { fill: #fff; }
.univ { font: bold 42px "Noto Sans", sans-serif; fill: #fff; }
.page .wm { font: 70px "Liberation Serif", serif; fill: rgba(50, 50, 60, .17); dominant-baseline: alphabetic; }
.rows { margin: 0; font: 300 18px/19px "Liberation Serif", "Noto Sans CJK JP", serif; color: #555; }
.cen { text-align: center; }
.ink2 { fill: none; stroke: #555; stroke-width: 2; }
.ink4 { fill: none; stroke: #333; stroke-width: 4; }
.ink5 { stroke: #333; stroke-width: 5; }
.frame-ink { fill: none; stroke: #231f20; stroke-width: 8; }
.call { fill: rgba(255, 255, 255, .85); stroke: #666; stroke-width: 2; }
.group { fill: none; stroke: #777; stroke-width: 3; }
```
